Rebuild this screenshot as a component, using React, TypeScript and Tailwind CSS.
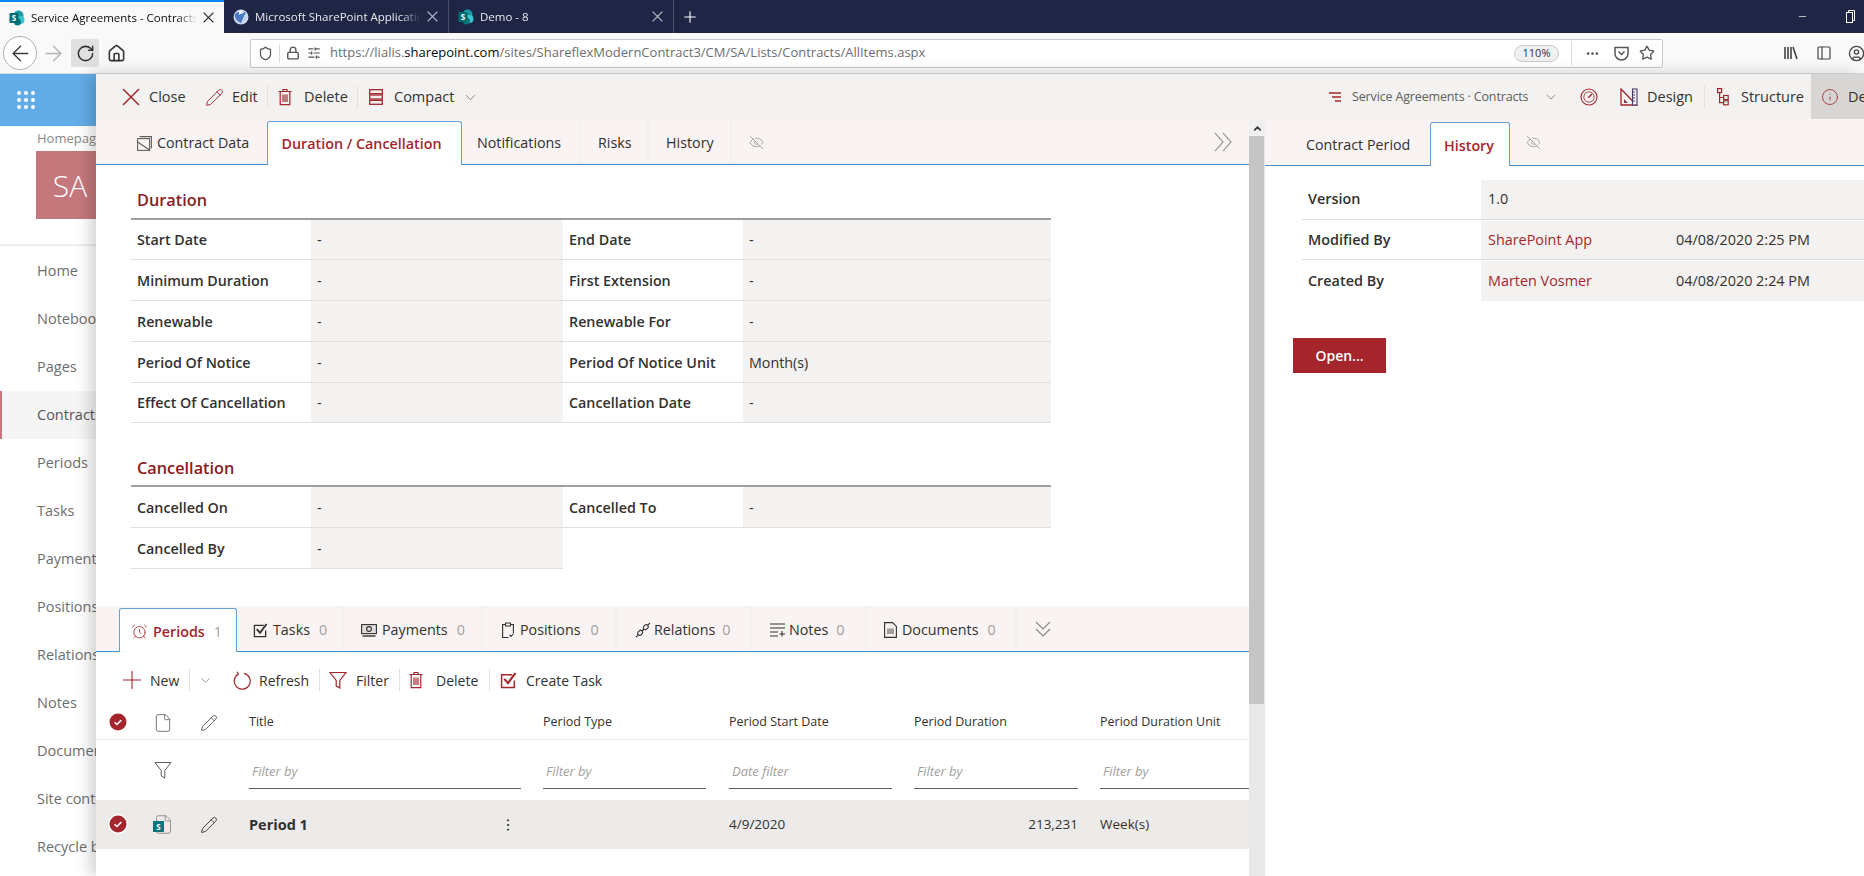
import React from "react";
import {
  Pencil, ChevronDown, Info, EyeOff, AlarmClock, File, EllipsisVertical, ArrowLeft, ArrowRight, RotateCw, House, Shield, Lock, Ellipsis, Star, Minus, CircleUser, PanelLeft, SlidersHorizontal, ChevronUp, Plus,
} from "lucide-react";

const RED = "#a4262c";
const DARK = "#323130";

function SpIcon({ size = 16 }: { size?: number }) {
  return (
    <svg width={size} height={size} viewBox="0 0 16 16" className="shrink-0">
      <circle cx="9.5" cy="5.5" r="5" fill="#1a9ba1" />
      <circle cx="11.5" cy="10" r="4" fill="#37c6d0" />
      <circle cx="8.5" cy="12" r="3.5" fill="#03787c" />
      <rect x="0.5" y="3" width="9" height="10" rx="1" fill="#036c70" />
      <text x="5" y="11" fontSize="8" fontWeight="700" fill="#fff" textAnchor="middle" fontFamily="Open Sans">S</text>
    </svg>
  );
}

function GlobeIcon() {
  return (
    <svg width="16" height="16" viewBox="0 0 16 16" className="shrink-0">
      <circle cx="8" cy="8" r="7.5" fill="#c9d8ee" />
      <path d="M2 5c3-3 8-4 11-1-2 2-3 6-5 10C5 13 1 9 2 5z" fill="#4a79c2" />
      <path d="M6 2c2-1 4 0 5 2-2 0-4 1-5 2z" fill="#f4f7fc" />
    </svg>
  );
}

function ThinX({ size = 14, color = "currentColor", w = 1.4 }: { size?: number; color?: string; w?: number }) {
  return (
    <svg width={size} height={size} viewBox="0 0 18 18" fill="none" stroke={color} strokeWidth={w} className="shrink-0">
      <path d="M1 1l16 16M17 1L1 17" />
    </svg>
  );
}

function BrowserTab({ title, active, icon, width }: { title: string; active?: boolean; icon: React.ReactNode; width: string }) {
  return (
    <div className={`${width} h-[33px] flex items-center gap-[6px] pl-[9px] pr-[10px] text-[11.5px] shrink-0 ${active ? "bg-[#f9f9fa] text-[#0c0c0d] border-t-2 border-[#0a84ff]" : "text-[#e8e8ee] border-r border-[#4a4f6a]"}`}>
      {icon}
      <span className="flex-1 min-w-0 overflow-hidden whitespace-nowrap [mask-image:linear-gradient(to_right,black_88%,transparent)]">{title}</span>
      <span className={active ? "text-[#333]" : "text-[#b5b7c4]"}><ThinX size={11} w={2.2} /></span>
    </div>
  );
}

function TitleBar() {
  return (
    <div className="h-[33px] bg-[#1f2544] flex items-center shrink-0">
      <BrowserTab active title="Service Agreements - Contracts" icon={<SpIcon />} width="w-[224px]" />
      <BrowserTab title="Microsoft SharePoint Application" icon={<GlobeIcon />} width="w-[225px]" />
      <BrowserTab title="Demo - 8" icon={<SpIcon />} width="w-[225px]" />
      <Plus size={18} strokeWidth={1.5} className="text-white ml-[7px]" />
      <div className="flex-1" />
      <Minus size={11} strokeWidth={1.5} className="text-white mr-[38px]" />
      <svg width="9" height="13" viewBox="0 0 9 13" fill="none" stroke="#fff" strokeWidth="1" className="mr-[9px]"><rect x="0.5" y="2.5" width="6" height="10" /><path d="M2.5 2.5V.5h6v10H6.5" /></svg>
    </div>
  );
}

function NavBar() {
  return (
    <div className="h-[41px] bg-[#f9f9fa] border-b border-[#dcdcdc] flex items-center shrink-0 overflow-hidden">
      <div className="ml-[3px] w-[34px] h-[34px] rounded-full border border-[#b1b1b3] bg-white flex items-center justify-center shrink-0">
        <ArrowLeft size={25} strokeWidth={1.3} className="text-[#3c3c3c]" />
      </div>
      <ArrowRight size={25} strokeWidth={1.3} className="text-[#b4b4b4] ml-[4px] shrink-0" />
      <div className="ml-[5px] w-[28px] h-[28px] rounded-[2px] bg-[#e0e0e1] flex items-center justify-center shrink-0">
        <RotateCw size={19} strokeWidth={1.9} className="text-[#333]" />
      </div>
      <House size={19} strokeWidth={2} className="text-[#333] ml-[8px] shrink-0" />
      <div className="ml-[124px] w-[1413px] h-[29px] bg-white border border-[#c8c8c8] rounded-[2px] flex items-center text-[13px] shrink-0">
        <Shield size={15} strokeWidth={2} className="ml-[7px] text-[#555]" />
        <div className="w-px h-[19px] bg-[#dcdcdc] ml-[6px]" />
        <Lock size={14} strokeWidth={2.4} className="ml-[6px] text-[#555]" />
        <SlidersHorizontal size={14} strokeWidth={2} className="ml-[7px] text-[#555]" />
        <span className="ml-[9px] whitespace-nowrap text-[#6d6d6f]">https://lialis.<span className="text-[#0c0c0d]">sharepoint.com</span>/sites/ShareflexModernContract3/CM/SA/Lists/Contracts/AllItems.aspx</span>
        <div className="flex-1" />
        <div className="w-[45px] h-[17px] rounded-full border border-[#c8c8c8] bg-[#f0f0f1] text-[11px] flex items-center justify-center text-[#333]">110%</div>
        <div className="w-px h-[24px] bg-[#dcdcdc] ml-[12px]" />
        <Ellipsis size={15} strokeWidth={2.4} className="ml-[13px] text-[#555]" />
        <svg width="15" height="15" viewBox="0 0 15 15" fill="none" stroke="#555" strokeWidth="1.5" className="ml-[14px]"><path d="M1 1.5h13v6a6.5 6.5 0 0 1-13 0zM4.5 5.5l3 3 3-3" /></svg>
        <Star size={16} strokeWidth={2} className="ml-[10px] mr-[7px] text-[#555]" />
      </div>
      <svg width="16" height="16" viewBox="0 0 16 16" className="ml-[120px] shrink-0 text-[#444]" stroke="currentColor" strokeWidth="1.6" fill="none"><path d="M2 2v12M5 2v12M8 2v12M10 2l4 12" /></svg>
      <PanelLeft size={16} strokeWidth={1.8} className="ml-[17px] text-[#444] shrink-0" />
      <CircleUser size={17} strokeWidth={1.8} className="ml-[16px] text-[#444] shrink-0" />
    </div>
  );
}

const navItems = ["Home", "Notebook", "Pages", "Contracts", "Periods", "Tasks", "Payments", "Positions", "Relations", "Notes", "Documents", "Site contents", "Recycle bin"];

function Sidebar() {
  return (
    <aside className="w-24 shrink-0 overflow-hidden bg-white">
      <div className="h-[52px] bg-[#62ade8] flex items-center pl-[17px]">
        <div className="grid grid-cols-3 gap-[3.5px]">
          {Array.from({ length: 9 }).map((_, i) => <div key={i} className="w-[3.5px] h-[3.5px] rounded-full bg-white" />)}
        </div>
      </div>
      <div className="h-[25px] pl-[37px] text-[13px] text-[#8a8886] whitespace-nowrap flex items-center">Homepage</div>
      <div className="ml-9 w-[68px] h-[68px] bg-[#c4787c] text-white text-[30px] font-light flex items-center justify-center">SA</div>
      <div className="h-[2px] mt-[25px] bg-[#eeeeee] w-full" />
      <div className="mt-px">
        {navItems.map((n) => (
          <div key={n} className={`h-12 flex items-center text-[14.5px] whitespace-nowrap ${n === "Contracts" ? "bg-[#f5f5f5] text-[#555] border-l-2 border-[#c4787c] pl-[35px]" : "pl-[37px] text-[#6f6e6d]"}`}>{n}</div>
        ))}
      </div>
    </aside>
  );
}

function TrashIcon({ size = 18, color = RED }: { size?: number; color?: string }) {
  return (
    <svg width={size} height={size} viewBox="0 0 18 18" fill="none" stroke={color} strokeWidth="1.2" className="shrink-0">
      <path d="M2.5 3.5h13M7 3.5V1.5h4v2M4.2 3.5v13.2h9.6V3.5M7 6.5v7.5M9 6.5v7.5M11 6.5v7.5" />
    </svg>
  );
}

function GaugeIcon() {
  return (
    <svg width="18" height="18" viewBox="0 0 18 18" fill="none" stroke={RED} className="shrink-0">
      <circle cx="9" cy="9" r="8" strokeWidth="1.1" />
      <circle cx="9" cy="9" r="5.2" strokeWidth="0.8" />
      <path d="M8.2 9.8L12 6" strokeWidth="1.4" />
    </svg>
  );
}

function DesignIcon() {
  return (
    <svg width="18" height="18" viewBox="0 0 18 18" fill="none" className="shrink-0">
      <path d="M1 1l15.5 16H1z" stroke={RED} strokeWidth="1.3" />
      <path d="M4 11l4 4H4z" fill="#7a3b48" />
      <rect x="12.5" y="1" width="4.5" height="16" fill="#f3f2f1" stroke="#4b3a66" strokeWidth="1.1" />
      <path d="M12.5 4h2.5M12.5 7h2.5M12.5 10h2.5M12.5 13h2.5" stroke="#4b3a66" strokeWidth="1" />
    </svg>
  );
}

function StructureIcon() {
  return (
    <svg width="12" height="18" viewBox="0 0 12 18" fill="none" stroke={RED} strokeWidth="1.2" className="shrink-0">
      <rect x="0.6" y="0.6" width="4" height="4" />
      <path d="M2.6 4.6v10h4M2.6 9.5h4" />
      <rect x="6.6" y="7.5" width="4.6" height="4" />
      <rect x="6.6" y="12.8" width="4.6" height="4" />
    </svg>
  );
}

function Sep() {
  return <div className="w-px h-[22px] bg-[#e3e1df] shrink-0" />;
}

function CommandBar() {
  const c = "text-[14.5px] text-[#323130] whitespace-nowrap shrink-0";
  return (
    <div className="h-[46px] bg-[#f3f2f1] flex items-center shrink-0 overflow-hidden">
      <div className="ml-[26px] shrink-0"><ThinX size={18} color={RED} w={1.5} /></div>
      <span className={`${c} ml-[9px] w-[37px]`}>Close</span>
      <Pencil size={19} strokeWidth={1.2} color={RED} className="ml-[19px] shrink-0" />
      <span className={`${c} ml-[8px] w-[25px]`}>Edit</span>
      <div className="ml-[10px]"><Sep /></div>
      <div className="ml-[8px]"><TrashIcon /></div>
      <span className={`${c} ml-[10px] w-[43px]`}>Delete</span>
      <div className="ml-[10px]"><Sep /></div>
      <svg width="14" height="16" viewBox="0 0 14 16" fill="none" stroke={RED} strokeWidth="1.3" className="ml-[11px] shrink-0"><rect x="0.7" y="0.7" width="12.6" height="4" /><rect x="0.7" y="6" width="12.6" height="4" /><rect x="0.7" y="11.3" width="12.6" height="4" /></svg>
      <span className={`${c} ml-[11px] w-[60px]`}>Compact</span>
      <ChevronDown size={17} strokeWidth={1} className="ml-[8px] text-[#605e5c] shrink-0" />
      <div className="flex-1" />
      <svg width="14" height="12" viewBox="0 0 14 12" stroke={RED} strokeWidth="1.5" fill="none" className="shrink-0"><path d="M1 2h12M4 6h9M7 10h6" /></svg>
      <span className="ml-[10px] w-[183px] text-[12.5px] tracking-[-0.15px] text-[#605e5c] whitespace-nowrap shrink-0">Service Agreements · Contracts</span>
      <ChevronDown size={16} strokeWidth={1} className="ml-[8px] text-[#605e5c] shrink-0" />
      <div className="ml-[21px]"><GaugeIcon /></div>
      <div className="ml-[22px]"><DesignIcon /></div>
      <span className={`${c} ml-[9px] w-[46px]`}>Design</span>
      <div className="ml-[11px]"><Sep /></div>
      <div className="ml-[12px]"><StructureIcon /></div>
      <span className={`${c} ml-[12px] w-[60px]`}>Structure</span>
      <div className="ml-[10px] w-[53px] h-full bg-[#d8d6d4] pl-[10px] flex items-center shrink-0 overflow-hidden">
        <Info size={18} strokeWidth={1.1} color={RED} className="shrink-0" />
        <span className={`${c} ml-[9px]`}>Details</span>
      </div>
    </div>
  );
}

function TopTab({ label, active, icon, className = "" }: { label: string; active?: boolean; icon?: React.ReactNode; className?: string }) {
  return (
    <div className={`flex items-center gap-[5px] text-[14.3px] whitespace-nowrap shrink-0 ${active ? "h-[44px] bg-white border border-b-0 border-[#62a0dc] rounded-t-[3px] text-[#a4262c] font-semibold translate-y-px mt-auto justify-center" : "h-full text-[#323130]"} ${className}`}>
      {icon}
      {label}
    </div>
  );
}

function ContractIcon() {
  return (
    <svg width="15" height="15" viewBox="0 0 15 15" fill="none" stroke="#605e5c" strokeWidth="1.1" className="shrink-0"><rect x="0.6" y="2.6" width="12" height="11.8" /><path d="M2.6 .6h11.8v11.8M.6 6l12 8" /></svg>
  );
}

function Field({ label, value, empty }: { label?: string; value?: string; empty?: boolean }) {
  if (empty) return <><div /><div /></>;
  return (
    <>
      <div className="h-[40.8px] pl-[6px] pt-px flex items-center text-[14.3px] font-semibold text-[#323130] whitespace-nowrap border-b border-[#e1dfdd]">{label}</div>
      <div className="h-[40.8px] pl-[6px] pt-px flex items-center text-[14.3px] text-[#323130] bg-[#f3f2f1] border-b border-[#e1dfdd]">{value}</div>
    </>
  );
}

function Section({ title, h, rows }: { title: string; h: string; rows: (string | null)[][] }) {
  return (
    <section className="ml-[35px] w-[920px]">
      <div className={`${h} flex items-end pb-[5px] pl-[6px] text-[16.3px] font-semibold text-[#8a1c22] border-b-2 border-[#a19f9d]`}>{title}</div>
      <div className="grid grid-cols-[180px_252px_180px_308px]">
        {rows.map((r, i) => (
          <React.Fragment key={i}>
            <Field label={r[0]!} value={r[1]!} />
            {r[2] ? <Field label={r[2]} value={r[3]!} /> : <Field empty />}
          </React.Fragment>
        ))}
      </div>
    </section>
  );
}

function BottomTab({ icon, label, count, w, active, gap = "gap-[5px]" }: { icon: React.ReactNode; label: string; count: number; w: string; active?: boolean; gap?: string }) {
  return (
    <div className={`${w} ${gap} shrink-0 flex items-center text-[14.3px] whitespace-nowrap ${active ? "h-[44px] mt-auto translate-y-px bg-white border border-b-0 border-[#62a0dc] rounded-t-[3px] text-[#a4262c] font-semibold pt-[2px]" : "h-full pt-[3px] text-[#323130] border-r-2 border-[#f3f0f0]"}`}>
      {icon}
      <span>{label}</span>
      <span className="ml-[4px] font-normal text-[#a19f9d]">{count}</span>
    </div>
  );
}

function Badge() {
  return (
    <svg width="18" height="18" viewBox="0 0 18 18"><circle cx="9" cy="9" r="8.5" fill={RED} /><path d="M5.5 9.2l2.4 2.3 4.4-4.4" stroke="#fff" strokeWidth="1.5" fill="none" /></svg>
  );
}

function CheckBoxIcon({ size, color, w = 1.4 }: { size: number; color: string; w?: number }) {
  return (
    <svg width={size} height={size} viewBox="0 0 16 16" fill="none" stroke={color} className="shrink-0">
      <path d="M13.5 8v6.5h-12v-12h10" strokeWidth={w} />
      <path d="M4 6.5l3.5 4L14.5 1" strokeWidth={w + 0.6} />
    </svg>
  );
}

function FunnelIcon({ color, w = 1.2 }: { color: string; w?: number }) {
  return (
    <svg width="18" height="18" viewBox="0 0 18 18" fill="none" stroke={color} strokeWidth={w} className="shrink-0">
      <path d="M1 1.5h16l-6.2 8v7.5l-3.6-2.2V9.5z" />
    </svg>
  );
}

function ChevronPair({ dir }: { dir: "right" | "down" }) {
  return dir === "right" ? (
    <svg width="19" height="20" viewBox="0 0 19 20" fill="none" stroke="#8a8886" strokeWidth="1.1"><path d="M1 1l8 9-8 9M9 1l8 9-8 9" /></svg>
  ) : (
    <svg width="16" height="16" viewBox="0 0 16 16" fill="none" stroke="#8a8886" strokeWidth="1.1"><path d="M1 1l7 7 7-7M1 8l7 7 7-7" /></svg>
  );
}

function FilterInput({ text }: { text: string }) {
  return <div className="h-[35px] border-b border-[#605e5c] pl-[3px] pt-[2px] flex items-center text-[13px] italic text-[#a19f9d]">{text}</div>;
}

const cols = "grid grid-cols-[44px_46px_63px_294px_186px_185px_186px_149px]";

function LeftPane() {
  const tb = "text-[14px] text-[#323130] whitespace-nowrap shrink-0";
  return (
    <div className="w-[1153px] shrink-0 bg-white overflow-hidden">
      <div className="h-[45px] bg-[#f9f3f3] border-b border-[#4a8fd0] flex items-end pr-[8px]">
        <TopTab className="w-[171px] pl-[41px] pt-[2px]" label="Contract Data" icon={<ContractIcon />} />
        <TopTab className="w-[195px] pt-px pr-[6px]" label="Duration / Cancellation" active />
        <TopTab className="w-[119px] pl-[15px] pt-[2px] border-r-2 border-[#f3f0f0]" label="Notifications" />
        <TopTab className="w-[68px] pl-[17px] pt-[2px] border-r-2 border-[#f3f0f0]" label="Risks" />
        <TopTab className="w-[83px] pl-[17px] pt-[2px] border-r-2 border-[#f3f0f0]" label="History" />
        <div className="h-full flex items-center ml-[17px]"><EyeOff size={15} strokeWidth={1.1} className="text-[#8a8886]" /></div>
        <div className="flex-1" />
        <div className="h-full flex items-center mr-[8px]"><ChevronPair dir="right" /></div>
      </div>

      <Section title="Duration" h="h-[54.5px]" rows={[
        ["Start Date", "-", "End Date", "-"],
        ["Minimum Duration", "-", "First Extension", "-"],
        ["Renewable", "-", "Renewable For", "-"],
        ["Period Of Notice", "-", "Period Of Notice Unit", "Month(s)"],
        ["Effect Of Cancellation", "-", "Cancellation Date", "-"],
      ]} />
      <Section title="Cancellation" h="h-[64px]" rows={[
        ["Cancelled On", "-", "Cancelled To", "-"],
        ["Cancelled By", "-", null, null],
      ]} />

      <div className="mt-[37px] h-[46px] bg-[#f9f3f3] border-b border-[#4a8fd0] flex items-end pl-[23px]">
        <BottomTab active w="w-[118px] pl-[11px]" icon={<AlarmClock size={17} strokeWidth={1.2} color={RED} className="shrink-0" />} label="Periods" count={1} />
        <BottomTab w="w-[107px] pl-[16px]" icon={<CheckBoxIcon size={15} color={DARK} />} label="Tasks" count={0} />
        <BottomTab w="w-[139px] pl-[17px]" icon={
          <svg width="16" height="13" viewBox="0 0 16 13" fill="none" stroke={DARK} strokeWidth="1.1" className="shrink-0"><rect x="0.6" y="0.6" width="14.8" height="9" fill="#e1dfdd" /><circle cx="8" cy="5" r="2.4" /><path d="M1.5 12h13" strokeWidth="1.4" /></svg>
        } label="Payments" count={0} />
        <BottomTab w="w-[134px] pl-[19px]" gap="gap-[6px]" icon={
          <svg width="12" height="16" viewBox="0 0 12 16" fill="none" stroke={DARK} strokeWidth="1.1" className="shrink-0"><path d="M3.5 2.5H.6v13h6M8.5 2.5h2.9V11M3.5 1h5v3h-5zM7.5 13l1.5 1.5 2.5-3" /></svg>
        } label="Positions" count={0} />
        <BottomTab w="w-[135px] pl-[18px]" gap="gap-[3px]" icon={
          <svg width="16" height="16" viewBox="0 0 16 16" fill="none" stroke={DARK} strokeWidth="1.1" className="shrink-0"><path d="M1 15l2.2-2.2M15 1l-2.2 2.2" /><rect x="-2.6" y="-2" width="5.2" height="4" rx="1.8" transform="translate(5.2 10.8) rotate(-45)" /><rect x="-2.6" y="-2" width="5.2" height="4" rx="1.8" transform="translate(10.8 5.2) rotate(-45)" /><path d="M7 9l2-2" /></svg>
        } label="Relations" count={0} />
        <BottomTab w="w-[115px] pl-[18px]" gap="gap-[4px]" icon={
          <svg width="15" height="14" viewBox="0 0 15 14" fill="none" stroke={DARK} strokeWidth="1.1" className="shrink-0"><path d="M0 1h15M0 5h15M0 9h8M0 13h8M12 8v5.5M9.5 11h5.5" /></svg>
        } label="Notes" count={0} />
        <BottomTab w="w-[150px] pl-[17px]" gap="gap-[5px]" icon={
          <svg width="13" height="16" viewBox="0 0 13 16" fill="none" stroke={DARK} strokeWidth="1.1" className="shrink-0"><path d="M.6.6h8l3.8 3.8v11H.6z" /><rect x="3" y="6.5" width="7" height="5.5" fill="#a19f9d" stroke="none" /></svg>
        } label="Documents" count={0} />
        <div className="h-full flex items-center ml-[18px] shrink-0"><ChevronPair dir="down" /></div>
      </div>

      <div className="h-[54px] flex items-center pl-[27px] pt-[2px]">
        <svg width="18" height="18" viewBox="0 0 18 18" stroke={RED} strokeWidth="1.1" className="shrink-0"><path d="M9 0v18M0 9h18" /></svg>
        <span className={`${tb} ml-[9px] w-[30px]`}>New</span>
        <div className="ml-[9px]"><Sep /></div>
        <ChevronDown size={15} strokeWidth={1} className="ml-[8px] text-[#605e5c] shrink-0" />
        <svg width="19" height="19" viewBox="0 0 19 19" fill="none" stroke={RED} strokeWidth="1.2" className="ml-[19px] shrink-0"><path d="M6.2 3.3A8 8 0 1 0 12 2.4M5.2 .8l1.2 2.6-2.7 1.1" /></svg>
        <span className={`${tb} ml-[8px] w-[49px]`}>Refresh</span>
        <div className="ml-[11px]"><Sep /></div>
        <div className="ml-[9px]"><FunnelIcon color={RED} /></div>
        <span className={`${tb} ml-[9px] w-[33px]`}>Filter</span>
        <div className="ml-[10px]"><Sep /></div>
        <div className="ml-[7px]"><TrashIcon /></div>
        <span className={`${tb} ml-[11px] w-[43px]`}>Delete</span>
        <div className="ml-[10px]"><Sep /></div>
        <div className="ml-[10px]"><CheckBoxIcon size={17} color={RED} /></div>
        <span className={`${tb} ml-[9px]`}>Create Task</span>
      </div>

      <div className={`${cols} h-[34px] items-center border-b border-[#edebe9] text-[12.5px] text-[#323130]`}>
        <div className="flex justify-center -translate-y-px"><Badge /></div>
        <div className="flex justify-center"><File size={20} strokeWidth={1} className="text-[#605e5c]" /></div>
        <div className="pl-[14px]"><Pencil size={18} strokeWidth={1} className="text-[#323130]" /></div>
        <div>Title</div>
        <div>Period Type</div>
        <div>Period Start Date</div>
        <div>Period Duration</div>
        <div className="whitespace-nowrap">Period Duration Unit</div>
      </div>

      <div className={`${cols} h-[60px] items-center`}>
        <div />
        <div className="flex justify-center"><FunnelIcon color="#605e5c" w={1} /></div>
        <div />
        <div className="pr-[22px] mt-[3px]"><FilterInput text="Filter by" /></div>
        <div className="pr-[23px] mt-[3px]"><FilterInput text="Filter by" /></div>
        <div className="pr-[22px] mt-[3px]"><FilterInput text="Date filter" /></div>
        <div className="pr-[22px] mt-[3px]"><FilterInput text="Filter by" /></div>
        <div className="mt-[3px]"><FilterInput text="Filter by" /></div>
      </div>

      <div className={`${cols} h-[49px] items-center bg-[#edebe9] text-[13.5px] text-[#323130]`}>
        <div className="flex justify-center -translate-y-px"><div className="rounded-full bg-white p-px flex"><Badge /></div></div>
        <div className="flex justify-center">
          <div className="relative w-[20px] h-[21px]">
            <File size={21} strokeWidth={1} className="text-[#8a8886] absolute inset-0" />
            <div className="absolute left-0 top-[7px] w-[11px] h-[11px] bg-[#03787c] text-white text-[8px] font-bold flex items-center justify-center">S</div>
          </div>
        </div>
        <div className="pl-[14px]"><Pencil size={18} strokeWidth={1.2} className="text-[#323130]" /></div>
        <div className="flex items-center">
          <span className="font-bold text-[14.5px]">Period 1</span>
          <EllipsisVertical size={16} strokeWidth={1.5} className="ml-[192px] text-[#323130]" />
        </div>
        <div />
        <div>4/9/2020</div>
        <div className="pr-[22px] text-right">213,231</div>
        <div>Week(s)</div>
      </div>
    </div>
  );
}

function ScrollBar() {
  return (
    <div className="w-4 shrink-0 bg-[#e9e9e9] flex flex-col">
      <div className="h-[16px] bg-[#f0f0f0] flex items-center justify-center"><ChevronUp size={11} strokeWidth={3.5} className="text-[#333]" /></div>
      <div className="h-[568px] w-[15px] bg-[#c5c5c5]" />
    </div>
  );
}

function RightPane() {
  const rows = [
    { l: "Version", v: "1.0", d: "", red: false },
    { l: "Modified By", v: "SharePoint App", d: "04/08/2020 2:25 PM", red: true },
    { l: "Created By", v: "Marten Vosmer", d: "04/08/2020 2:24 PM", red: true },
  ];
  return (
    <div className="flex-1 min-w-0 bg-white overflow-hidden -mt-px">
      <div className="h-[47px] bg-[#f9f3f3] border-b border-[#4a8fd0] flex items-end">
        <TopTab className="w-[165px] pl-[41px] pt-[5px]" label="Contract Period" />
        <TopTab className="w-[80px] pt-[2px] pr-[2px]" label="History" active />
        <div className="h-full flex items-center ml-[16px]"><EyeOff size={15} strokeWidth={1.1} className="text-[#8a8886]" /></div>
      </div>
      <div className="ml-[37px] mt-[13px]">
        {rows.map((r, i) => (
          <div key={r.l} className={`h-[40.5px] pt-px grid grid-cols-[179px_195px_1fr] items-stretch text-[14.4px] ${i < 2 ? "border-b border-[#e1dfdd]" : ""}`}>
            <div className="pl-[6px] flex items-center font-semibold text-[#323130]">{r.l}</div>
            <div className={`pl-[7px] flex items-center bg-[#f3f2f1] ${r.red ? "text-[#a4262c]" : "text-[#323130]"}`}>{r.v}</div>
            <div className="flex items-center bg-[#f3f2f1] text-[#323130]">{r.d}</div>
          </div>
        ))}
      </div>
      <button className="ml-[28px] mt-[37.5px] w-[93px] h-[35px] bg-[#a4262c] text-white text-[14px] font-semibold block">Open...</button>
    </div>
  );
}

export default function App() {
  return (
    <div className="w-[1864px] h-[876px] overflow-hidden flex flex-col bg-white font-['Open_Sans','Noto_Sans',sans-serif]">
      <TitleBar />
      <NavBar />
      <div className="flex flex-1 min-h-0">
        <Sidebar />
        <div className="flex-1 min-w-0 flex flex-col relative shadow-[-6px_0_14px_rgba(0,0,0,0.18)]">
          <CommandBar />
          <div className="flex flex-1 min-h-0">
            <LeftPane />
            <ScrollBar />
            <RightPane />
          </div>
        </div>
      </div>
    </div>
  );
}
